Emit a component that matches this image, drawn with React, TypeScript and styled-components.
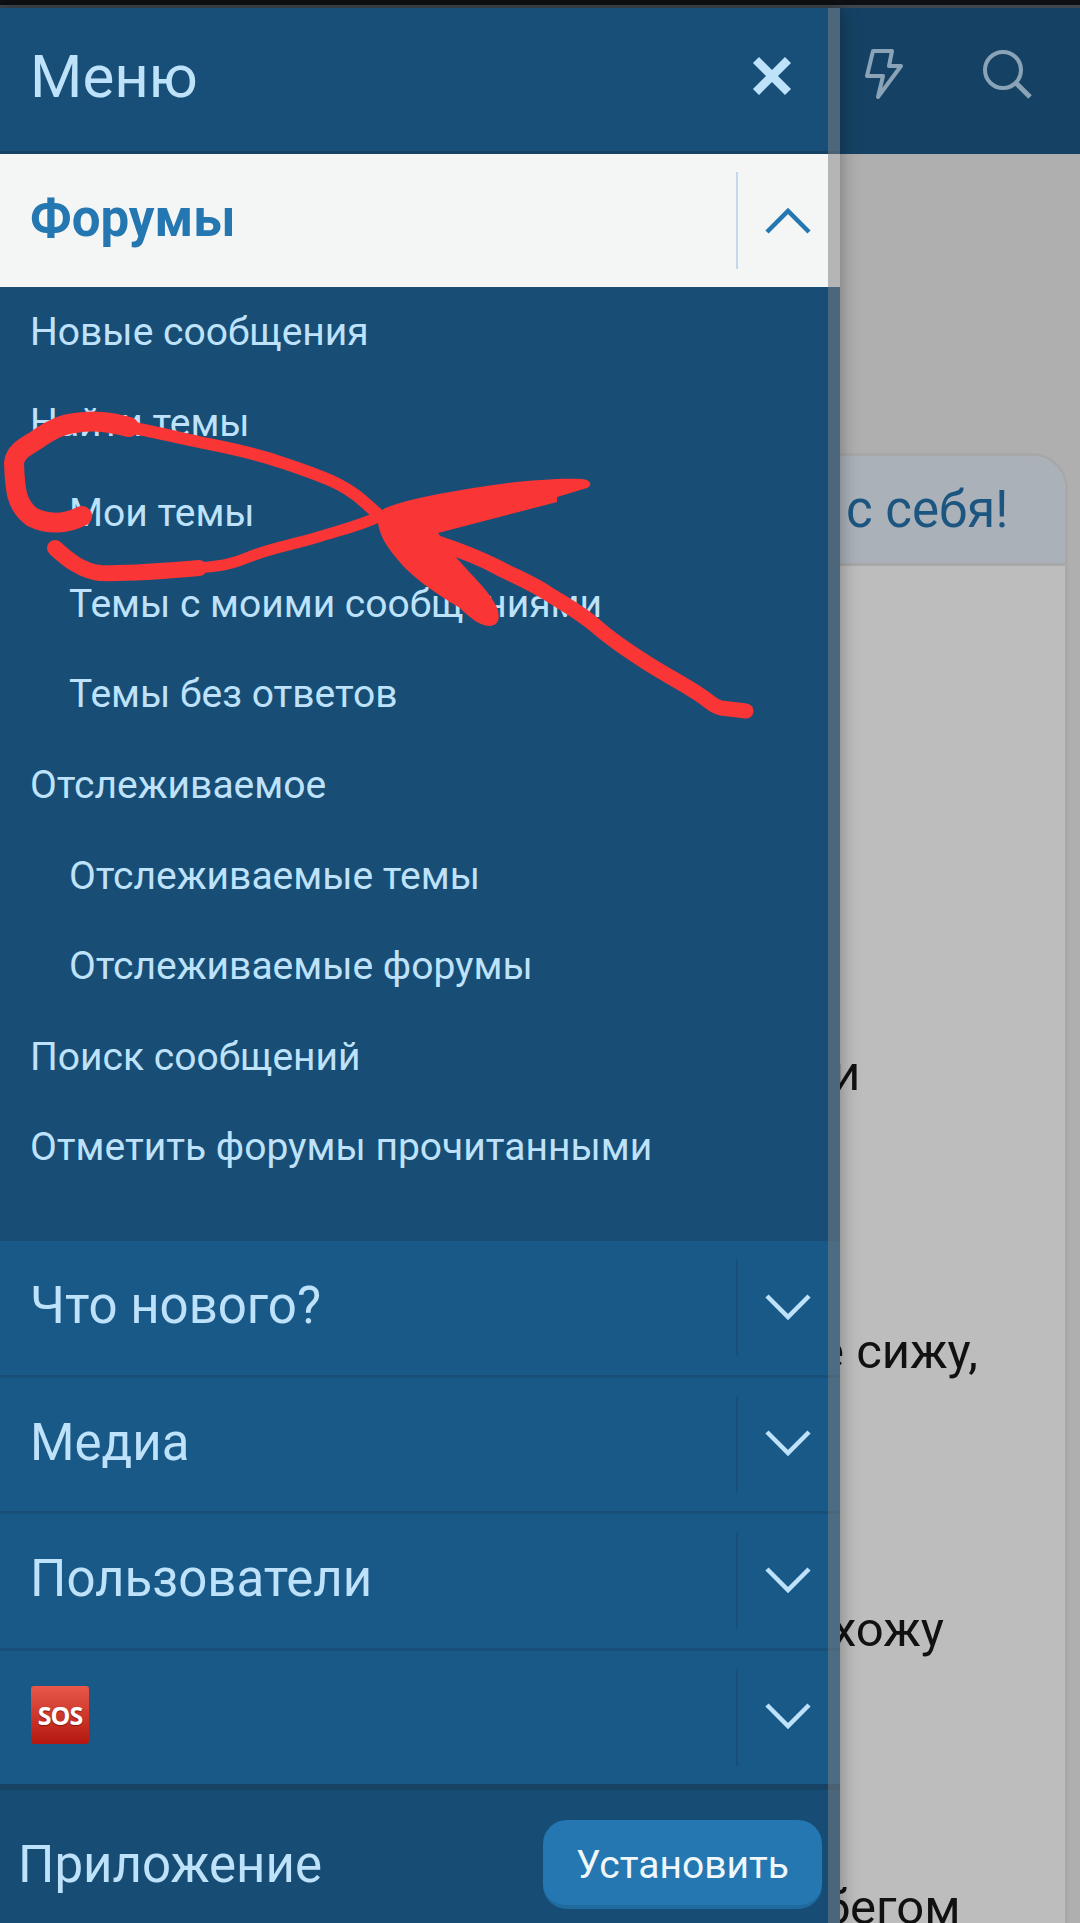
import React from 'react';
import styled, { createGlobalStyle } from 'styled-components';

const GlobalStyle = createGlobalStyle`
  html, body {
    margin: 0;
    padding: 0;
    background: #afafaf;
  }
  * {
    box-sizing: border-box;
  }
`;

const Screen = styled.div`
  position: relative;
  width: 1080px;
  height: 1923px;
  overflow: hidden;
  background: #afafaf;
  font-family: Roboto, 'Noto Sans', sans-serif;
`;

const StatusStrip = styled.div`
  height: 8px;
  background: #0f1014;
  border-bottom: 3px solid #41474f;
`;

const TopBar = styled.div`
  height: 146px;
  background: #154264;
  display: flex;
  justify-content: flex-end;
  align-items: flex-start;
  gap: 78px;
  padding: 41px 48px 0 0;
`;

const PageBody = styled.div`
  padding: 299px 12px 0;
`;

const Card = styled.div`
  border: 3px solid #a8a8a8;
  border-radius: 36px 36px 0 0;
  background: #bdbdbd;
`;

const CardHeader = styled.div`
  height: 110px;
  background: #aab1b9;
  border-radius: 33px 33px 0 0;
  border-bottom: 3px solid #a8a8a8;
  padding-left: 831px;
  display: flex;
  align-items: center;
  font-size: 51px;
  color: #1c5680;
`;

const CardText = styled.div`
  padding-top: 481px;
  display: flex;
  flex-direction: column;
  gap: 224px;
`;

const TextLine = styled.div<{ $indent: number }>`
  height: 54px;
  line-height: 54px;
  font-size: 49px;
  color: #111;
  white-space: nowrap;
  padding-left: ${(p) => p.$indent}px;
`;

const Drawer = styled.nav`
  position: absolute;
  top: 8px;
  left: 0;
  width: 840px;
  height: 1915px;
  display: flex;
  flex-direction: column;
  background: #184e76;
  box-shadow: 0 0 18px rgba(0, 0, 0, 0.35);
`;

const ScrollTrack = styled.div`
  position: absolute;
  top: 0;
  right: 0;
  bottom: 0;
  width: 12px;
  background: rgba(123, 125, 128, 0.53);
`;

const DrawerHeader = styled.div`
  height: 146px;
  flex: none;
  display: flex;
  align-items: center;
  justify-content: space-between;
  padding: 0 48px 7px 30px;
  background: #184f78;
  border-bottom: 3px solid #174263;
`;

const DrawerTitle = styled.div`
  font-size: 60px;
  color: #bfe2fb;
`;

const CategoryRow = styled.div<{ $open?: boolean }>`
  flex: none;
  height: ${(p) => (p.$open ? 133 : 136.5)}px;
  display: flex;
  align-items: center;
  background: ${(p) => (p.$open ? '#f4f5f5' : '#195988')};
  border-bottom: ${(p) => (p.$open ? 'none' : '3px solid #174f79')};
`;

const CategoryLabel = styled.div<{ $open?: boolean }>`
  flex: 1;
  padding: 0 0 ${(p) => (p.$open ? 5 : 4)}px 30px;
  font-size: 51px;
  font-weight: ${(p) => (p.$open ? 700 : 400)};
  color: ${(p) => (p.$open ? '#2577b1' : '#bfe2fb')};
`;

const Toggle = styled.div<{ $open?: boolean }>`
  flex: none;
  width: 104px;
  height: 97px;
  padding-right: 2px;
  display: flex;
  align-items: center;
  justify-content: center;
  border-left: 2px solid ${(p) => (p.$open ? '#c4d8e7' : '#174f79')};
`;

const SubList = styled.div`
  flex: none;
  height: 954px;
`;

const SubItem = styled.div<{ $nested?: boolean }>`
  height: 90.6px;
  line-height: 90.6px;
  padding-left: ${(p) => (p.$nested ? 69 : 30)}px;
  font-size: 39px;
  color: #bfe2fb;
  white-space: nowrap;
`;

const SosBadge = styled.span`
  display: flex;
  align-items: center;
  justify-content: center;
  width: 58px;
  height: 58px;
  margin-left: 1px;
  border-radius: 3px;
  background: linear-gradient(#e8584a, #b3170f);
  color: #fff;
  font-family: 'Open Sans', sans-serif;
  font-size: 25px;
  font-weight: 700;
  letter-spacing: -1px;
  text-shadow: 0 1px 1px rgba(90, 0, 0, 0.6);
`;

const DrawerFooter = styled.div`
  flex: 1;
  display: flex;
  align-items: flex-start;
  justify-content: space-between;
  padding: 30px 18px 0 18px;
  background: #174d74;
  border-top: 6px solid #174263;
  margin-top: -3px;
`;

const FooterLabel = styled.div`
  font-size: 51px;
  line-height: 89px;
  color: #bfe2fb;
`;

const InstallButton = styled.button`
  width: 279px;
  height: 89px;
  padding: 4px 0 0;
  border: none;
  border-bottom: 4px solid #1f6a9f;
  border-radius: 24px;
  background: #2577b1;
  color: #f0f7fb;
  font-family: inherit;
  font-size: 39px;
`;

const Scribble = styled.svg`
  position: absolute;
  top: 0;
  left: 0;
  pointer-events: none;
`;

const Chevron = ({ up, color }: { up?: boolean; color: string }) => (
  <svg width="46" height="28" viewBox="0 0 46 28">
    <polyline
      points={up ? '2,25 23,4 44,25' : '2,2 23,23 44,2'}
      fill="none"
      stroke={color}
      strokeWidth="4.5"
    />
  </svg>
);

const BoltIcon = () => (
  <svg width="40" height="50" viewBox="0 0 40 50">
    <path
      d="M9 2h19l-3 15h12L14 48l5-21H3z"
      fill="none"
      stroke="#8aa3b6"
      strokeWidth="4"
      strokeLinejoin="round"
    />
  </svg>
);

const SearchIcon = () => (
  <svg width="50" height="50" viewBox="0 0 50 50">
    <circle cx="21" cy="21" r="18" fill="none" stroke="#8aa3b6" strokeWidth="4" />
    <line x1="34" y1="34" x2="48" y2="48" stroke="#8aa3b6" strokeWidth="5" />
  </svg>
);

const CloseIcon = () => (
  <svg width="40" height="40" viewBox="0 0 40 40">
    <path d="M4 4l32 32M36 4L4 36" stroke="#bfe2fb" strokeWidth="8.5" />
  </svg>
);

const subItems = [
  { label: 'Новые сообщения' },
  { label: 'Найти темы' },
  { label: 'Мои темы', nested: true },
  { label: 'Темы с моими сообщениями', nested: true },
  { label: 'Темы без ответов', nested: true },
  { label: 'Отслеживаемое' },
  { label: 'Отслеживаемые темы', nested: true },
  { label: 'Отслеживаемые форумы', nested: true },
  { label: 'Поиск сообщений' },
  { label: 'Отметить форумы прочитанными' },
];

const pageLines = [
  { text: 'и', indent: 817 },
  { text: 'е сижу,', indent: 803 },
  { text: 'хожу', indent: 817 },
  { text: 'бегом', indent: 808 },
];

const App = () => {
  return (
    <Screen>
      <GlobalStyle />
      <StatusStrip />
      <TopBar>
        <BoltIcon />
        <SearchIcon />
      </TopBar>
      <PageBody>
        <Card>
          <CardHeader>с себя!</CardHeader>
          <CardText>
            {pageLines.map((line) => (
              <TextLine key={line.text} $indent={line.indent}>
                {line.text}
              </TextLine>
            ))}
          </CardText>
        </Card>
      </PageBody>

      <Drawer>
        <DrawerHeader>
          <DrawerTitle>Меню</DrawerTitle>
          <CloseIcon />
        </DrawerHeader>
        <CategoryRow $open>
          <CategoryLabel $open>Форумы</CategoryLabel>
          <Toggle $open>
            <Chevron up color="#2577b1" />
          </Toggle>
        </CategoryRow>
        <SubList>
          {subItems.map((item) => (
            <SubItem key={item.label} $nested={item.nested}>
              {item.label}
            </SubItem>
          ))}
        </SubList>
        {['Что нового?', 'Медиа', 'Пользователи'].map((label) => (
          <CategoryRow key={label}>
            <CategoryLabel>{label}</CategoryLabel>
            <Toggle>
              <Chevron color="#bfe2fb" />
            </Toggle>
          </CategoryRow>
        ))}
        <CategoryRow>
          <CategoryLabel>
            <SosBadge>SOS</SosBadge>
          </CategoryLabel>
          <Toggle>
            <Chevron color="#bfe2fb" />
          </Toggle>
        </CategoryRow>
        <DrawerFooter>
          <FooterLabel>Приложение</FooterLabel>
          <InstallButton>Установить</InstallButton>
        </DrawerFooter>
        <ScrollTrack />
      </Drawer>

      {/* red marker drawn on top of the screenshot */}
      <Scribble width="1080" height="1923" viewBox="0 0 1080 1923">
        <g fill="none" stroke="#f93535" strokeLinecap="round" strokeLinejoin="round">
          <path
            d="M82 516C68 523 50 526 32 517C16 505 15 490 14 463C15 452 25 447 35 441C50 430 62 424 75 423C95 420 110 422 129 427"
            strokeWidth="20"
          />
          <path d="M129 427C160 433 175 437 199 442S250 452 274 460S320 475 338 484S365 503 380 516" strokeWidth="12" />
          <path d="M380 516C360 526 340 530 318 537S270 548 249 557S215 566 199 568" strokeWidth="11" />
          <path d="M199 568C165 571 130 574 100 573C82 571 68 560 55 548" strokeWidth="16" />
          <path d="M438 543C465 552 480 558 497 567S530 582 547 593S580 612 597 627S630 652 647 663S680 682 697 693S712 706 721 708L746 711" strokeWidth="15" />
        </g>
        <path
          fill="#f93535"
          d="M388 507C415 497 445 493 473 488C510 482 550 478 582 479C592 480 592 486 587 488L557 497V502L438 533L450 550C470 575 490 590 498 610C500 620 498 625 490 626C480 626 470 618 460 608C430 590 410 575 398 560C385 545 380 535 378 523C376 515 380 510 388 507Z"
        />
      </Scribble>
    </Screen>
  );
};

export default App;
